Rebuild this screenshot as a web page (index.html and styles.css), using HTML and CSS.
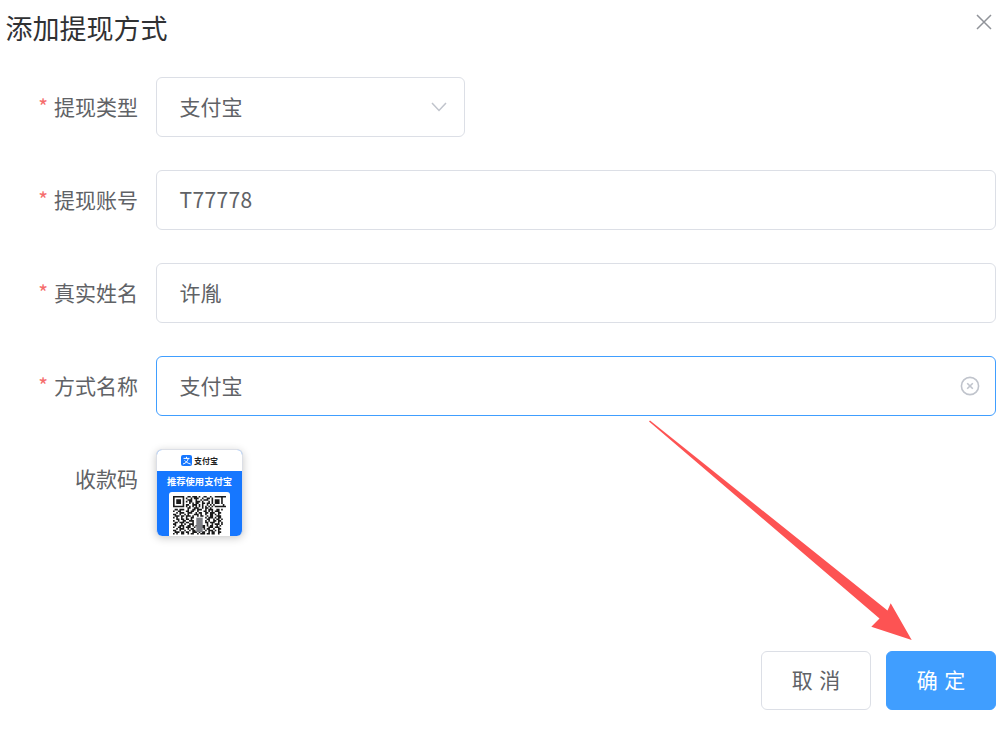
FILE: index.html
```html
<!DOCTYPE html>
<html lang="zh-CN">
<head>
<meta charset="utf-8">
<title>添加提现方式</title>
<link rel="stylesheet" href="styles.css">
</head>
<body>
<div class="dialog">
  <header class="head">
    <h1 class="title">添加提现方式</h1>
    <svg class="close" width="16" height="16" viewBox="0 0 16 16"><path d="M1 1L15 15M15 1L1 15" stroke="#909399" stroke-width="1.5" fill="none"/></svg>
  </header>
  <form class="form">
    <div class="row">
      <div class="label"><span class="star">*</span>提现类型</div>
      <div class="field select"><span class="value">支付宝</span>
        <svg class="chev" width="16" height="10" viewBox="0 0 16 10"><path d="M1 1L8 8.5L15 1" stroke="#c0c4cc" stroke-width="1.5" fill="none"/></svg>
      </div>
    </div>
    <div class="row">
      <div class="label"><span class="star">*</span>提现账号</div>
      <div class="field"><span class="value latin">T77778</span></div>
    </div>
    <div class="row">
      <div class="label"><span class="star">*</span>真实姓名</div>
      <div class="field"><span class="value">许胤</span></div>
    </div>
    <div class="row">
      <div class="label"><span class="star">*</span>方式名称</div>
      <div class="field focus"><span class="value">支付宝</span>
        <svg class="clear" width="20" height="20" viewBox="0 0 20 20"><circle cx="10" cy="10" r="8.6" stroke="#c0c4cc" stroke-width="1.6" fill="none"/><path d="M7.2 7.2L12.8 12.8M12.8 7.2L7.2 12.8" stroke="#c0c4cc" stroke-width="1.6" fill="none"/></svg>
      </div>
    </div>
    <div class="row upload">
      <div class="label">收款码</div>
      <div class="card">
        <div class="card-top">
          <svg class="ali" width="11" height="11" viewBox="0 0 11 11"><rect width="11" height="11" rx="2" fill="#1677ff"/><path d="M2.5 3.4H8.5M5.5 1.8V3.4M7.3 3.4C6.8 6 4.8 8.4 2 9M3.6 5.4C5 7 7 8.4 9.6 9" stroke="#fff" stroke-width="1" fill="none"/></svg>
          <span class="ali-name">支付宝</span>
        </div>
        <div class="card-body">
          <div class="card-text">推荐使用支付宝</div>
          <div class="qr-box">
            <svg class="qr" width="53" height="39" viewBox="0 0 33 24.3">
              <path stroke="#1a1a1a" stroke-width="1" fill="none" d="M0 .5h7m2 0h2m1 0h3m1 0h1m2 0h2m2 0h1m2 0h7
M0 1.5h1m5 0h1m1 0h1m2 0h1m1 0h3m2 0h1m2 0h2m1 0h1m5 0h1
M0 2.5h1m1 0h3m1 0h1m2 0h3m2 0h1m2 0h1m1 0h3m2 0h1m1 0h3m1 0h1
M0 3.5h1m1 0h3m1 0h1m1 0h1m1 0h2m2 0h3m1 0h1m3 0h1m1 0h1m1 0h3m1 0h1
M0 4.5h1m1 0h3m1 0h1m3 0h1m1 0h1m1 0h2m2 0h2m1 0h2m1 0h1m1 0h3m1 0h1
M0 5.5h1m5 0h1m1 0h2m2 0h3m1 0h1m1 0h1m2 0h1m1 0h1m1 0h1m5 0h1
M0 6.5h7m1 0h1m1 0h1m1 0h1m1 0h1m1 0h1m1 0h1m1 0h1m1 0h1m1 0h1m1 0h7
M9 7.5h2m2 0h3m2 0h1m1 0h2m1 0h1
M1 8.5h2m1 0h3m2 0h1m2 0h2m1 0h3m2 0h1m1 0h3m2 0h2m1 0h1
M0 9.5h1m2 0h2m3 0h2m1 0h2m2 0h1m3 0h2m1 0h1m1 0h1m1 0h3
M2 10.5h1m1 0h3m2 0h3m2 0h1m1 0h2m2 0h2m1 0h3m2 0h2
M0 11.5h2m2 0h1m2 0h1m1 0h1m3 0h3m1 0h1m2 0h1m2 0h2m1 0h1m1 0h1
M1 12.5h3m1 0h2m1 0h3m1 0h1m2 0h1m1 0h2m2 0h1m1 0h2m2 0h3
M0 13.5h1m1 0h1m2 0h1m2 0h1m2 0h2m7 0h1m1 0h3m1 0h1m1 0h2
M2 14.5h2m1 0h2m1 0h2m1 0h1m9 0h2m2 0h1m1 0h2m1 0h1
M0 15.5h1m2 0h1m2 0h2m2 0h3m7 0h1m1 0h1m2 0h2m1 0h2
M1 16.5h2m1 0h3m1 0h2m2 0h1m7 0h2m1 0h3m2 0h1m1 0h1
M0 17.5h2m3 0h1m1 0h1m2 0h3m8 0h1m2 0h1m1 0h3m1 0h1
M1 18.5h1m2 0h3m2 0h2m1 0h1m1 0h2m1 0h3m1 0h1m1 0h2m2 0h1m1 0h1
M0 19.5h1m2 0h2m1 0h1m1 0h3m2 0h1m2 0h1m1 0h2m2 0h3m1 0h3
M2 20.5h1m1 0h3m2 0h1m1 0h2m2 0h3m1 0h1m1 0h2m2 0h1m2 0h2
M0 21.5h2m2 0h1m2 0h1m2 0h1m1 0h2m3 0h1m2 0h1m1 0h3m1 0h1m1 0h1
M1 22.5h3m1 0h2m1 0h2m2 0h3m1 0h1m1 0h2m2 0h1m1 0h2m2 0h2
M0 23.5h1m1 0h1m2 0h2m2 0h1m1 0h2m2 0h1m1 0h3m1 0h2m1 0h2m2 0h1"/>
              <rect x="14.5" y="13.5" width="4" height="9" fill="#7d7f85"/>
            </svg>
          </div>
        </div>
      </div>
    </div>
  </form>
  <footer class="foot">
    <button class="btn" type="button">取 消</button>
    <button class="btn primary" type="button">确 定</button>
  </footer>
  <svg class="arrow" width="1008" height="729" viewBox="0 0 1008 729"><polygon fill="#fd5353" points="649,421.5 650,420.5 887.5,610.5 890.7,603.3 911.7,640 871.3,626.7 879.5,618.5"/></svg>
</div>
</body>
</html>
```

FILE: styles.css
```css
* { box-sizing: border-box; }
html, body { margin: 0; padding: 0; background: #fff; }
body { font-family: "Noto Sans CJK SC", "Liberation Sans", sans-serif; }
.dialog { position: relative; width: 1008px; height: 729px; overflow: hidden; display: flex; flex-direction: column; padding: 0 12px 19px 5px; }
.head { display: flex; justify-content: space-between; align-items: flex-start; height: 77px; padding-top: 8px; }
.title { margin: 0 0 0 .6px; font-size: 27px; line-height: 40px; font-weight: 400; color: #303133; }
.close { margin-top: 6px; margin-right: 4px; }
.form { display: flex; flex-direction: column; gap: 33px; flex: 1; }
.row { display: flex; align-items: center; height: 60px; }
.upload { align-items: flex-start; height: 87px; }
.label { width: 133px; text-align: right; font-size: 21px; color: #606266; line-height: 58px; height: 60px; flex: none; }
.star { color: #f56c6c; margin-right: 6px; font-size: 21px; }
.field { position: relative; margin-left: 18px; flex: 1; height: 60px; border: 1px solid #dcdfe6; border-radius: 6px; padding: 0 23px 0 22.5px; display: flex; align-items: center; justify-content: space-between; background: #fff; }
.select { flex: none; width: 309px; }
.focus { border-color: #409eff; }
.value { font-size: 21px; color: #606266; line-height: 28px; margin-bottom: 2px; }
.latin { letter-spacing: .35px; }
.chev { margin-right: -6px; }
.clear { margin-right: -8px; }
.card { margin-left: 18px; width: 87px; height: 87px; border-radius: 6px; overflow: hidden; background: #1677ff; box-shadow: 0 2px 8px rgba(0, 0, 0, .22); display: flex; flex-direction: column; border: 1px solid #dcdfe6; border-bottom: 0; }
.card-top { height: 21px; background: #fff; display: flex; align-items: center; justify-content: center; gap: 2px; flex: none; }
.ali-name { font-size: 8px; font-weight: 700; line-height: 11px; color: #222; }
.card-body { flex: 1; display: flex; flex-direction: column; align-items: center; overflow: hidden; }
.card-text { font-size: 9.3px; font-weight: 700; line-height: 11px; color: #fff; margin-top: 5px; white-space: nowrap; }
.qr-box { margin-top: 5px; width: 61px; flex: 1; background: #fff; border-radius: 3px 3px 0 0; padding: 4px 4px 0; overflow: hidden; }
.qr { display: block; }
.foot { display: flex; justify-content: flex-end; gap: 15px; }
.btn { width: 110px; height: 59px; border: 1px solid #dcdfe6; border-radius: 6px; background: #fff; color: #606266; font: 400 21px/1 "Noto Sans CJK SC", "Liberation Sans", sans-serif; word-spacing: 2px; padding: 0 0 2px; }
.primary { background: #409eff; border-color: #409eff; color: #fff; }
.arrow { position: absolute; left: 0; top: 0; pointer-events: none; }
```
